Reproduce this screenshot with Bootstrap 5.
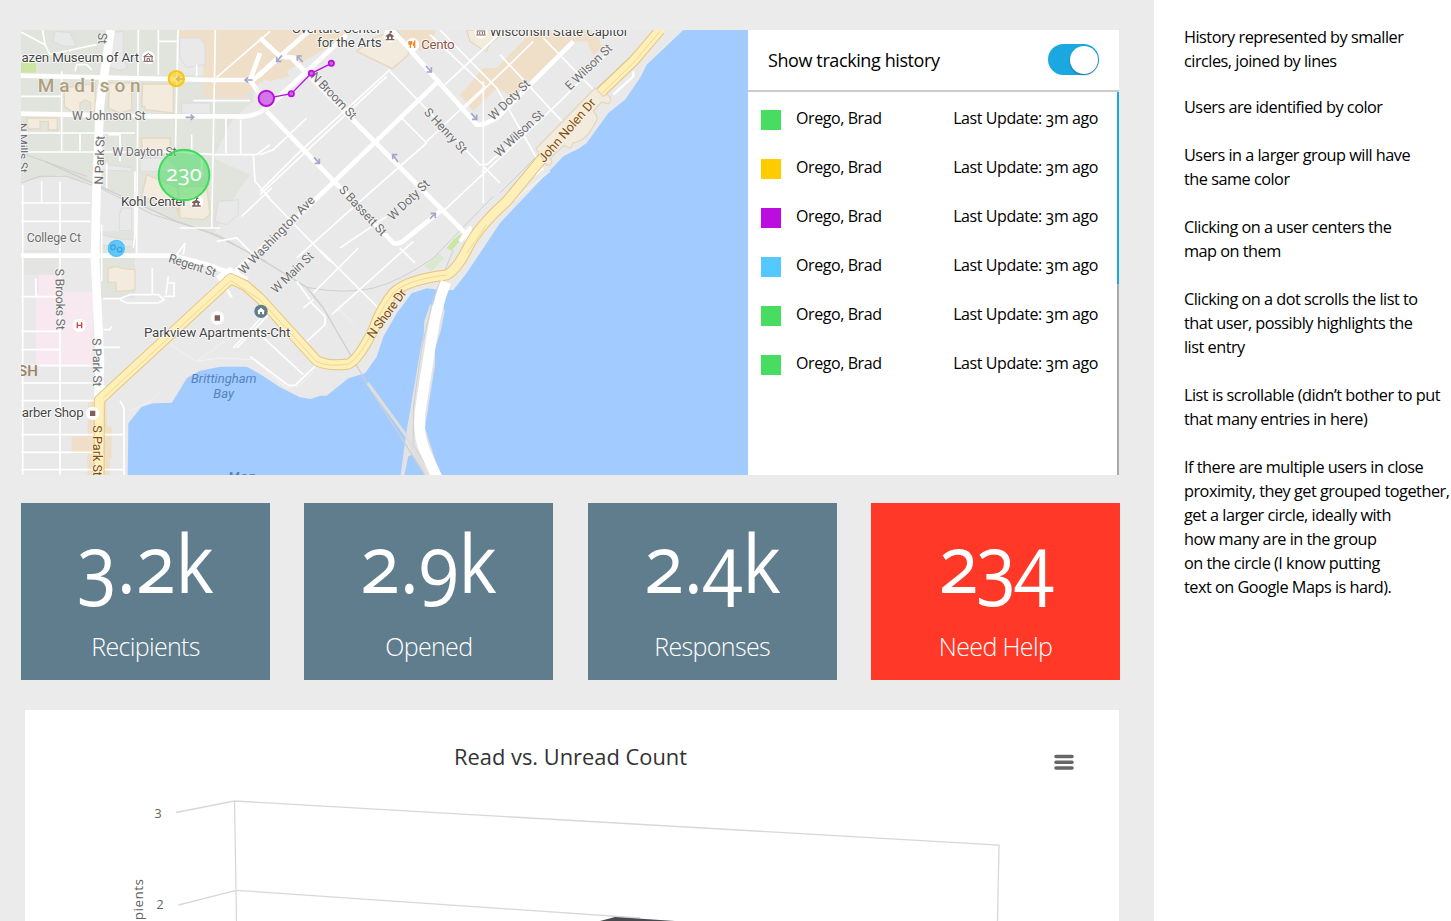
<!DOCTYPE html>
<html lang="en">
<head>
<meta charset="utf-8">
<meta name="viewport" content="width=device-width, initial-scale=1">
<title>Tracking dashboard</title>
<link href="https://cdn.jsdelivr.net/npm/bootstrap@5.3.0/dist/css/bootstrap.min.css" rel="stylesheet">
<style>
  body { font-family: "Open Sans", "Noto Sans", sans-serif; font-feature-settings: "onum"; color: #000; background: #fff; height: 921px; overflow: hidden; }
  .board { width: 1154px; height: 921px; background: #ebebeb; padding: 30px 34px 0 21px; overflow: hidden; }
  .tracking { height: 445px; width: 1098px; background: #fff; }
  .map-area { width: 727px; height: 445px; display: block; flex: none; }
  .panel-head { height: 62px; border-bottom: 2px solid #ccc; padding: 0 20px; font-size: 18px; letter-spacing: -.4px; }
  .toggle { width: 51px; height: 31px; border-radius: 16px; background: #1ba8e0; padding: 2px 1px; margin-bottom: 2px; }
  .knob { width: 28px; height: 28px; border-radius: 50%; background: #fff; box-shadow: 0 1px 2px rgba(0,0,0,.35); }
  .scroll-track { width: 2px; background: #aaa; }
  .scroll-thumb { height: 192px; background: #1ba8e0; }
  .people { padding-top: 14px; }
  .person { height: 49px; padding: 0 19px 0 13px; font-size: 16px; line-height: 24px; letter-spacing: -.42px; }
  .swatch { width: 20px; height: 20px; margin: 4px 15px 0 0; }
  .stats { width: 1099px; margin-top: 28px; }
  .stat { width: 249px; height: 177px; background: #607d8d; color: #fff; }
  .stat.alarm { background: #ff3827; }
  .figure-num { font-size: 80px; line-height: 100px; padding-top: 9px; transform: scaleX(.91); }
  .alarm .figure-num { letter-spacing: -2px; }
  .stat-label { font-size: 25px; line-height: 34px; padding-top: 17px; font-weight: 300; letter-spacing: -.65px; }
  .chart-card { width: 1094px; height: 211px; margin: 30px 0 0 4px; background: #fff; }
  .notes { padding: 25px 0 0 30px; font-size: 16.3px; line-height: 24px; letter-spacing: -.5px; white-space: nowrap; }
  .notes p { margin: 0 0 24px; }
  .notes p:first-child { margin-bottom: 22px; }
  .map-area text { font-family: Roboto, sans-serif; }
</style>
</head>
<body>
<div class="d-flex">
  <main class="board flex-shrink-0">
    <section class="tracking d-flex">
      <svg class="map-area" viewBox="3 6 2181 1335" preserveAspectRatio="none">
        <rect x="3" y="6" width="2181" height="1335" fill="#e9e9e9"/>
        <!-- campus and districts -->
        <path fill="#e1e3dd" d="M3 6H470V140L700 145V220L640 270L580 390L690 440L660 480L580 620L470 580L230 470L120 440L3 460ZM240 610H345V810H240Z"/>
        <path fill="#e1e3dd" d="M3 666H115V795H50V740H3Z" opacity=".6"/>
        <path fill="#cbe6a3" d="M3 98H48V134H3Z"/>
        <path fill="#f0dfc8" d="M470 6H1010L870 90L800 130L810 145L750 160L735 155L680 195V210H550V110L555 60L530 30H470ZM1120 6H1250L1230 50L1200 70ZM1430 120L1540 6H1730L1745 60L1720 82L1700 40L1660 40L1535 165L1475 205L1430 180L1360 250L1320 200L1390 120Z"/>
        <path fill="#f0dfc8" d="M205 1120H260V1195H275V1290H270V1341H202V1278H155V1225H202Z"/>
        <path fill="#f8e8f0" d="M55 740H125V792H218V1012H48V795H55Z"/>
        <path fill="#cbe6a3" d="M1280 660L1300 635L1325 615L1318 640L1295 668Z"/>
        <path fill="#d9e8cf" d="M1215 715L1255 675L1272 690L1235 730Z"/>
        <!-- buildings -->
        <g fill="#f3ebdd" stroke="#e5d8c0" stroke-width="4">
          <path d="M133 180L225 165V250H212V225L195 215L180 225V250H155L133 235ZM268 165H335V245L300 255L265 240ZM368 168H460V255L375 245V235H365ZM20 270H112V306H85V280H60V303H25ZM365 330H450V380H365ZM380 440L475 480V560L470 540L365 505ZM475 475H560L570 560L550 575L480 570ZM265 720L290 715L310 722L345 725V785L330 788L288 790V763H263Z"/>
          <path d="M1010 70L1060 30L1130 6L1165 60L1165 80L1117 122ZM1340 6H1440V25L1410 45L1400 70L1380 60L1350 40Z"/>
        </g>
        <g fill="#e9e9e9" stroke="#dcdcdc" stroke-width="3">
          <path d="M105 10L150 14L165 45V55H130L100 40ZM270 15L310 10V90L322 120L300 127L268 118ZM485 225H570V258H485ZM360 390H440L470 420L440 430H360ZM230 405L335 420V430L230 425ZM595 520L655 515V560L620 590L585 580ZM305 540H335V608H298V560ZM240 620L315 635H340V655H280L245 650ZM478 30H540L555 50V110L500 118L480 90Z"/>
        </g>
        <!-- lake -->
        <path fill="#a2ccff" d="M1990 6L1880 110L1860 150L1815 215L1765 255L1700 345L1675 362L1630 385L1440 585L1370 690L1340 735L1300 786L1260 785L1220 781L1175 796L1130 856L1090 926L1070 986L1035 1036L985 1051L920 1103H900L872 1113L840 1108L780 1078L720 1038L680 1016H600L540 1028L500 1051L470 1101L455 1124L400 1126L365 1136L325 1186L323 1341H2184V6Z"/>
        <path fill="#e3e3e3" d="M1240 830L1270 830L1274 850L1262 910L1245 962V1010L1215 1200L1260 1341H1220L1176 1280L1165 1285L1153 1341H1142L1158 1220L1203 955L1211 920L1213 880L1230 830Z"/>
        <!-- railway lines -->
        <g fill="none" stroke="#cfcfcf" stroke-width="3">
          <path d="M75 400L240 475L470 580L600 625L750 710L860 778L910 840L1040 1065L1215 1341" stroke-width="4"/>
          <path d="M1043 1065L1160 1225L1220 1341" stroke="#dedede" stroke-width="9"/>
          <path d="M860 778Q980 800 1060 780T1240 690L1420 505M1300 666L1240 810L1205 960L1180 1140L1180 1250L1235 1341M3 465L60 445L140 445L240 480L400 560L560 610L740 700"/>
          <path d="M3 375L200 445M1440 495L1560 375M1720 190L1915 6"/>
        </g>
        <!-- minor streets -->
        <g fill="none" stroke="#fff" stroke-width="5">
          <path d="M3 205H125M3 315H345M3 372L470 372L580 380H710L750 350M3 525H210M3 580H210M65 460V525M8 470V1341M120 460V1341M3 806H120M3 910H120M3 965H120M3 1013H215M3 1065H215M3 1118H225M3 1220H310M3 1273H220M3 1325H310M180 315V372M125 130V370M68 6L75 50L3 12M75 50L90 80M90 80L180 60L230 50M165 130L170 110H200L215 125M265 320H300V400M260 405V480M345 430V620L340 660M355 6L350 680M415 6V140M415 40H470M474 6L466 380M586 6L575 600M515 320V380M545 390V440M590 148L750 10M618 270V375M662 275V378M530 110V145"/>
          <path d="M520 218H690M700 380L705 460L750 510M665 565L755 480M480 600L600 600M590 640L650 630L700 680M490 680L495 645L470 680M3 135M245 590V760M250 812H300L330 800H415L432 815L415 825H320L300 815M438 800L445 745M445 765H462V805H432M397 720V800M250 905H270L275 895M245 958H300M48 750V805"/>
          <path d="M720 500L1100 145M720 380L760 365L860 270M1110 130L1380 410M1140 265L1220 345M1220 345L1020 520L830 690M1220 340L1390 180M1390 160V525M1390 415L1440 465M1275 545L1440 390L1620 220L1780 60M1120 6L1110 30M1260 6L1430 180L1550 390M1635 290L1440 80M1230 20L1400 180M1570 30L1730 195M1375 410H1400L1480 340M1275 170L1430 25M1335 240L1540 40M1100 565L960 660M830 760L870 815M870 820L915 865V890L860 940M850 840L880 815M650 960L760 845M720 920L850 1040M825 1072L890 1010M825 1072H805L690 985M935 860L1180 640M900 666L1080 845M880 795L1015 660M1140 660L1185 705M735 498L930 700M1110 125L830 380L720 490"/>
          <path d="M300 1118L312 1140V1341M720 805L755 835L640 960"/>
        </g>
        <g fill="none" stroke="#f3f3f3" stroke-width="3">
          <path d="M330 1150L390 1120L420 1090M450 950L530 1000L600 990L700 995L800 1080L840 1072L890 1020M530 1000L640 920M1510 490L1590 430L1440 550M935 860L960 845L1000 885"/>
          <path d="M1780 200L1840 145V130M1520 460L1570 420" stroke="#fff" stroke-width="7"/>
        </g>
        <!-- avenues -->
        <g fill="none" stroke="#fff" stroke-width="14" stroke-linejoin="round">
          <path d="M3 143L580 156L700 156L870 6M3 257L400 265H650Q700 270 740 240L980 20M720 75L690 156L720 200L740 245M3 683H450Q550 700 640 740M1117 6L1370 290H1390L1430 270L1660 40"/>
          <path d="M740 250L1120 645Q1140 650 1155 635L1260 550L1275 545M815 90L1340 620M630 745L860 540L1260 155M715 145L780 85L830 90M780 85L720 30"/>
          <path d="M272 6L240 230L230 470L225 690L240 1000L235 1120" stroke-width="26"/>
          <path d="M1320 640L1350 600L1330 680" stroke-width="12"/>
          <path d="M595 755L630 730L680 760M240 1080L270 1095" stroke-width="24"/>
          <path d="M610 765L635 808" stroke-width="8"/>
        </g>
        <!-- highway -->
        <g fill="none" stroke-linejoin="round">
          <path stroke="#e4c680" stroke-width="33" d="M237 1341L238 1116L632 752L675 772L720 811L890 998Q925 1016 985 1008Q1015 995 1060 906Q1080 845 1120 795Q1160 755 1280 741Q1310 725 1340 666Q1370 600 1460 520L1555 405L1740 195L1840 100L1920 6"/>
          <path stroke="#ffefb9" stroke-width="27" d="M237 1341L238 1116L632 752L675 772L720 811L890 998Q925 1016 985 1008Q1015 995 1060 906Q1080 845 1120 795Q1160 755 1280 741Q1310 725 1340 666Q1370 600 1460 520L1555 405L1740 195L1840 100L1925 0"/>
          <path stroke="#eccb7c" stroke-width="2" d="M250 1110L632 758L720 815L890 1001Q925 1018 985 1008Q1015 995 1060 906Q1080 845 1120 795Q1160 755 1280 741M1340 676L1400 590M1745 197L1840 105L1920 10"/>
          <path stroke="#fff" stroke-width="32" d="M1278 762Q1250 830 1235 930L1205 1120Q1188 1210 1215 1270L1252 1350"/>
        </g>
        <path fill="#f3ebdd" stroke="#e5d8c0" stroke-width="4" d="M1725 180L1750 205C1765 190 1780 215 1765 227L1745 222L1720 250Q1740 270 1725 285Q1700 340 1658 345Q1655 370 1632 352L1590 390Q1605 410 1580 412L1548 362Z"/>
        <!-- one-way arrows -->
        <g fill="none" stroke="#a0a8cc" stroke-width="5">
          <path d="M497 268H520M512 260L521 268L512 276"/>
          <path d="M698 156H676M684 148L675 156L684 164M490 153H470M478 146L470 153L478 160M786 82L770 100M770 86V100H784M848 102L832 84M832 98V84H846M1218 114L1234 132M1234 118V132H1220M1354 256L1370 274M1370 260V274H1356M882 388L898 406M898 392V406H884M1134 402L1118 380M1118 394V380H1132M1230 572L1246 556M1232 556H1246V570"/>
        </g>
        <!-- street labels -->
        <g fill="#6e6e6e" font-size="37" stroke="#f4f4f4" stroke-width="5" paint-order="stroke" stroke-linejoin="round">
          <text x="156" y="276" textLength="221">W Johnson St</text>
          <text x="277" y="385" textLength="193">W Dayton St</text>
          <text x="20" y="643" textLength="163">College Ct</text>
          <text transform="translate(249 470) rotate(-88)" textLength="146">N Park St</text>
          <text transform="translate(235 14) rotate(90)">St</text>
          <text transform="translate(-6 285) rotate(89)" textLength="150">N Mills St</text>
          <text transform="translate(106 722) rotate(89)" textLength="184">S Brooks St</text>
          <text transform="translate(217 931) rotate(89)" textLength="145">S Park St</text>
          <text transform="translate(443 701) rotate(18)" textLength="148">Regent St</text>
          <text transform="translate(671 741) rotate(-46)" textLength="310">W Washington Ave</text>
          <text transform="translate(768 798) rotate(-44)" textLength="160">W Main St</text>
          <text transform="translate(870 147) rotate(46)" textLength="180">N Broom St</text>
          <text transform="translate(955 487) rotate(47)" textLength="190">S Bassett St</text>
          <text transform="translate(1210 254) rotate(47)" textLength="170">S Henry St</text>
          <text transform="translate(1118 579) rotate(-44)" textLength="157">W Doty St</text>
          <text transform="translate(1420 279) rotate(-44)" textLength="157">W Doty St</text>
          <text transform="translate(1437 389) rotate(-43)" textLength="187">W Wilson St</text>
          <text transform="translate(1650 188) rotate(-44)" textLength="179">E Wilson St</text>
        </g>
        <g fill="#7c4a14" font-size="38" stroke="#fff5d8" stroke-width="4" paint-order="stroke">
          <text transform="translate(219 1192) rotate(90)" textLength="152">S Park St</text>
          <text transform="translate(1060 934) rotate(-54)" textLength="172">N Shore Dr</text>
          <text transform="translate(1572 406) rotate(-49)" textLength="240">John Nolen Dr</text>
        </g>
        <g fill="#444" font-size="40" stroke="#fff" stroke-width="5" paint-order="stroke" stroke-linejoin="round">
          <text x="-17" y="101" textLength="374">hazen Museum of Art</text>
          <text x="303" y="534" textLength="197">Kohl Center</text>
          <text x="372" y="927" textLength="439">Parkview Apartments-Cht</text>
          <text x="5" y="1168" textLength="186">arber Shop</text>
          <text x="815" y="15" textLength="268">Overture Center</text>
          <text x="892" y="57" textLength="193">for the Arts</text>
          <text x="1409" y="25" textLength="412">Wisconsin State Capitol</text>
          <text x="1204" y="63" textLength="100" fill="#8f5548">Cento</text>
        </g>
        <text x="53" y="191" font-size="57" font-weight="500" fill="#ab9f84" stroke="#f3efe6" stroke-width="5" paint-order="stroke" textLength="309">Madison</text>
        <text x="-6" y="1043" font-size="45" font-weight="500" fill="#9e8161" textLength="60">SH</text>
        <g fill="#5583c2" font-size="39" font-style="italic">
          <text x="513" y="1065" textLength="197">Brittingham</text>
          <text x="580" y="1109" textLength="62">Bay</text>
          <text x="625" y="1358" font-weight="500" textLength="82">Mon</text>
        </g>
        <!-- place markers -->
        <g fill="#fff">
          <circle cx="385" cy="89" r="20"/><circle cx="530" cy="521" r="20"/><circle cx="178" cy="892" r="20"/><circle cx="592" cy="870" r="20"/>
          <circle cx="218" cy="1156" r="20"/><circle cx="1111" cy="22" r="20"/><circle cx="1178" cy="50" r="20"/><circle cx="1383" cy="12" r="20"/>
        </g>
        <g fill="#80605b">
          <path d="M584 862h16v16h-16zM210 1148h16v16h-16z"/>
          <path fill="none" stroke="#80605b" stroke-width="3" d="M371 86L385 77L399 86ZM374 87V99M396 87V99M370 100H400M381 99V92H389V99"/>
          <path d="M528 508h7v5h-4v3l9 6v3h-3v7h5v4h-26v-4h4v-7h-4v-3l12-7zM526 525v7h6v-7z"/>
          <path d="M1109 9h7v5h-4v3l9 6v3h-3v7h5v4h-26v-4h4v-7h-4v-3l12-7zM1107 26v7h6v-7z"/>
          <path fill="none" stroke="#80605b" stroke-width="3" d="M1370 9H1396M1372 10V20M1394 10V20M1369 21H1397M1379 19V12M1387 19V12"/>
        </g>
        <path d="M172 883V901M185 883V901M172 892H185" stroke="#d8423f" stroke-width="4"/>
        <path d="M1171 40V60M1167 39V48H1175V39M1184 60V40Q1180 45 1181 52H1184" fill="none" stroke="#ee8a2b" stroke-width="4"/>
        <circle cx="723" cy="850" r="20" fill="#607d8d"/><path fill="#fff" d="M711 850L723 839L735 850H732V859H726V852H720V859H714V850Z"/>
        <!-- tracked users -->
        <polyline points="739,211 814,197 874,136 934,106" fill="none" stroke="#bb0ddf" stroke-width="4"/>
        <g stroke="#bb0ddf" stroke-width="6">
          <circle cx="739" cy="211" r="23" fill="#d477e6"/>
          <g fill="#cd62df" stroke-width="5"><circle cx="814" cy="197" r="8"/><circle cx="874" cy="136" r="8"/><circle cx="934" cy="106" r="8"/></g>
        </g>
        <circle cx="469" cy="152" r="23" fill="#ffcc00" fill-opacity=".55" stroke="#fbc60a" stroke-width="6"/>
        <circle cx="289" cy="661" r="24" fill="#55c3fb" fill-opacity=".92" stroke="#4fc0fa" stroke-width="4"/>
        <g fill="none" stroke="#38a5e4" stroke-width="4"><circle cx="279" cy="658" r="7"/><circle cx="299" cy="665" r="7"/></g>
        <circle cx="492" cy="441" r="76" fill="#47dd60" fill-opacity=".55" stroke="#3edb5b" stroke-width="6"/>
        <text x="438" y="459" font-size="68" fill="#fff" style="font-family:'Open Sans'" textLength="107" lengthAdjust="spacingAndGlyphs">230</text>
      </svg>
      <div class="flex-grow-1">
        <div class="panel-head d-flex align-items-center justify-content-between">
          <span>Show tracking history</span>
          <div class="toggle d-flex justify-content-end"><div class="knob"></div></div>
        </div>
        <div class="d-flex justify-content-between" style="height:383px">
          <div class="flex-grow-1 people">
            <div class="person d-flex"><i class="swatch" style="background:#47dd60"></i><span>Orego, Brad</span><span class="ms-auto">Last Update: 3m ago</span></div>
            <div class="person d-flex"><i class="swatch" style="background:#ffcc00"></i><span>Orego, Brad</span><span class="ms-auto">Last Update: 3m ago</span></div>
            <div class="person d-flex"><i class="swatch" style="background:#bb0ddf"></i><span>Orego, Brad</span><span class="ms-auto">Last Update: 3m ago</span></div>
            <div class="person d-flex"><i class="swatch" style="background:#55c8ff"></i><span>Orego, Brad</span><span class="ms-auto">Last Update: 3m ago</span></div>
            <div class="person d-flex"><i class="swatch" style="background:#47dd60"></i><span>Orego, Brad</span><span class="ms-auto">Last Update: 3m ago</span></div>
            <div class="person d-flex"><i class="swatch" style="background:#47dd60"></i><span>Orego, Brad</span><span class="ms-auto">Last Update: 3m ago</span></div>
          </div>
          <div class="scroll-track"><div class="scroll-thumb"></div></div>
        </div>
      </div>
    </section>
    <section class="stats d-flex justify-content-between text-center">
      <div class="stat"><div class="figure-num">3.2k</div><div class="stat-label">Recipients</div></div>
      <div class="stat"><div class="figure-num">2.9k</div><div class="stat-label">Opened</div></div>
      <div class="stat"><div class="figure-num">2.4k</div><div class="stat-label">Responses</div></div>
      <div class="stat alarm"><div class="figure-num">234</div><div class="stat-label">Need Help</div></div>
    </section>
    <section class="chart-card">
      <svg class="d-block" width="1094" height="211" viewBox="25 710 1094 211">
        <text x="454" y="765" font-size="22" fill="#333" textLength="233" lengthAdjust="spacingAndGlyphs">Read vs. Unread Count</text>
        <path d="M1056 756.5H1072M1056 762.3H1072M1056 768H1072" stroke="#666" stroke-width="3.6" stroke-linecap="round"/>
        <g fill="none" stroke="#d8d8d8" stroke-width="1.3">
          <path d="M176 812.5L234.500 801L999 845L997.500 921M234.500 801L236.500 921M178.500 905L236 890.300L640 918"/>
        </g>
        <path d="M600 921L615 917L675 921Z" fill="#4b4a50"/>
        <g fill="#606060" font-size="12.500" style="font-feature-settings:'lnum'"><text x="154.500" y="818">3</text><text x="156.500" y="909">2</text>
        <text transform="translate(143 948) rotate(-90)" font-size="13.500" textLength="69">Recipients</text></g>
      </svg>
    </section>
  </main>
  <aside class="notes">
    <p>History represented by smaller<br>circles, joined by lines</p>
    <p>Users are identified by color</p>
    <p>Users in a larger group will have<br>the same color</p>
    <p>Clicking on a user centers the<br>map on them</p>
    <p>Clicking on a dot scrolls the list to<br>that user, possibly highlights the<br>list entry</p>
    <p>List is scrollable (didn’t bother to put<br>that many entries in here)</p>
    <p>If there are multiple users in close<br>proximity, they get grouped together,<br>get a larger circle, ideally with<br>how many are in the group<br>on the circle (I know putting<br>text on Google Maps is hard).</p>
  </aside>
</div>
<script src="https://cdn.jsdelivr.net/npm/bootstrap@5.3.0/dist/js/bootstrap.bundle.min.js"></script>
</body>
</html>
